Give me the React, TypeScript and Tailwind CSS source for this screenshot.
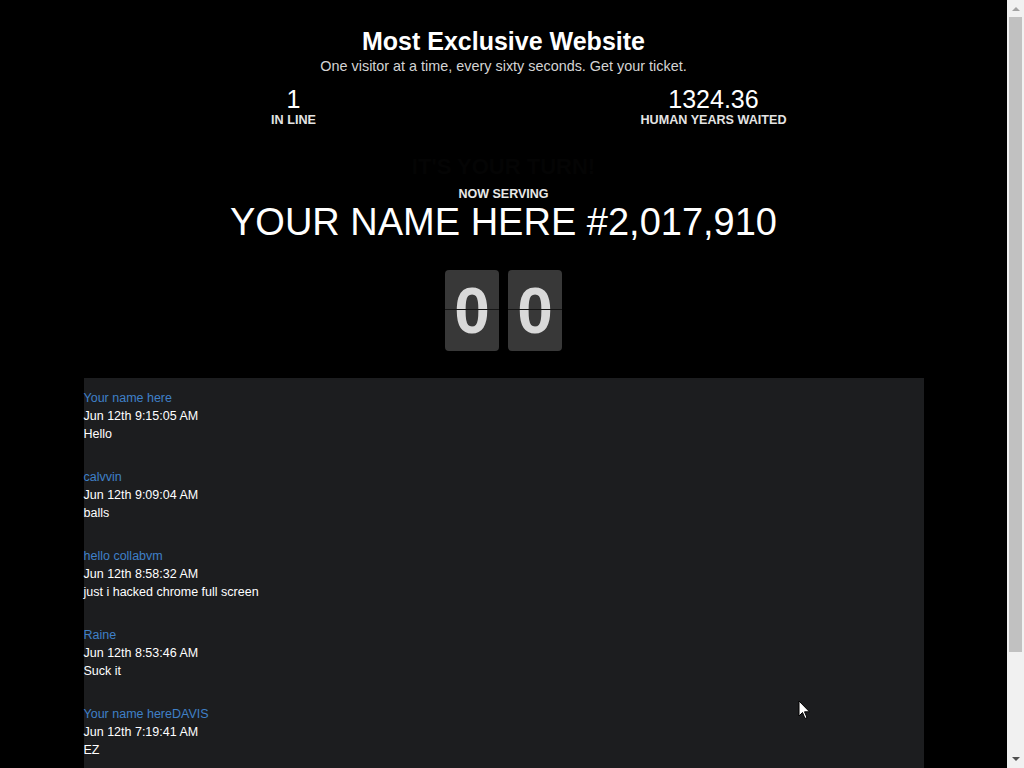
const messages = [
  { name: 'Your name here', time: 'Jun 12th 9:15:05 AM', text: 'Hello' },
  { name: 'calvvin', time: 'Jun 12th 9:09:04 AM', text: 'balls' },
  { name: 'hello collabvm', time: 'Jun 12th 8:58:32 AM', text: 'just i hacked chrome full screen' },
  { name: 'Raine', time: 'Jun 12th 8:53:46 AM', text: 'Suck it' },
  { name: 'Your name hereDAVIS', time: 'Jun 12th 7:19:41 AM', text: 'EZ' },
];

function FlipDigit({ value }: { value: string }) {
  return (
    <div className="relative w-[54px] h-[81px] rounded-[4px] bg-[#383838] flex items-center justify-center shadow-[0_1px_2px_rgba(0,0,0,0.6)]">
      <span className="text-[64px] font-bold leading-none text-[#d9d9d9]">{value}</span>
      <div className="absolute left-0 right-0 top-[39px] h-px bg-[#151515]" />
    </div>
  );
}

function Scrollbar() {
  return (
    <div className="w-[17px] shrink-0 bg-[#f1f1f1] flex flex-col items-center">
      <div className="h-[17px] flex items-center justify-center">
        <svg width="8" height="5" viewBox="0 0 8 5">
          <path d="M0 5 L4 1 L8 5 Z" fill="#a3a3a3" />
        </svg>
      </div>
      <div className="w-[13px] h-[635px] bg-[#c1c1c1]" />
      <div className="flex-1" />
      <div className="h-[17px] flex items-center justify-center">
        <svg width="8" height="5" viewBox="0 0 8 5">
          <path d="M0 0 L4 4 L8 0 Z" fill="#505050" />
        </svg>
      </div>
    </div>
  );
}

export default function App() {
  return (
    <div className="h-screen flex overflow-hidden bg-black text-white font-['Liberation_Sans',Arial,sans-serif]">
      <main className="relative flex-1 min-w-0 overflow-hidden">
        <div className="max-w-[840px] mx-auto pt-[27px] text-center">
          <h1 className="text-[25px] leading-[28px] font-bold">Most Exclusive Website</h1>
          <p className="mt-[3px] text-[14.4px] leading-[16px] text-[#d4d4d4]">
            One visitor at a time, every sixty seconds. Get your ticket.
          </p>

          <div className="mt-[11px] grid grid-cols-2">
            <div className="flex flex-col items-center">
              <div className="text-[25px] leading-[28px]">1</div>
              <div className="text-[12.6px] leading-[14px] font-bold text-[#e4e4e4]">IN LINE</div>
            </div>
            <div className="flex flex-col items-center">
              <div className="text-[25px] leading-[28px]">1324.36</div>
              <div className="text-[12.6px] leading-[14px] font-bold text-[#e4e4e4]">HUMAN YEARS WAITED</div>
            </div>
          </div>

          <div className="mt-[28px] text-[22px] leading-[24px] font-bold text-[#040404]">IT'S YOUR TURN!</div>
          <div className="mt-[7px] text-[12.5px] leading-[16px] font-bold text-[#e8e8e8]">NOW SERVING</div>
          <div className="text-[38px] leading-[40px]">YOUR NAME HERE #2,017,910</div>

          <div className="mt-[28px] flex justify-center gap-[9px]">
            <FlipDigit value="0" />
            <FlipDigit value="0" />
          </div>
        </div>

        <div className="max-w-[840px] mx-auto mt-[27px] bg-[#1c1d1f] pt-[11px] pb-[20px] text-[12.5px] leading-[18px] text-left">
          {messages.map((m) => (
            <div key={m.name + m.time} className="mb-[25px]">
              <div className="text-[#3f80c8]">{m.name}</div>
              <div className="text-white">{m.time}</div>
              <div className="text-white">{m.text}</div>
            </div>
          ))}
        </div>

        <svg className="absolute left-[798px] top-[700px]" width="13" height="20" viewBox="0 0 13 20">
          <path
            d="M1 1 L1 16 L4.5 12.5 L7 18.5 L9 17.5 L6.5 11.8 L11.5 11.8 Z"
            fill="white"
            stroke="black"
            strokeWidth="1"
          />
        </svg>
      </main>
      <Scrollbar />
    </div>
  );
}
